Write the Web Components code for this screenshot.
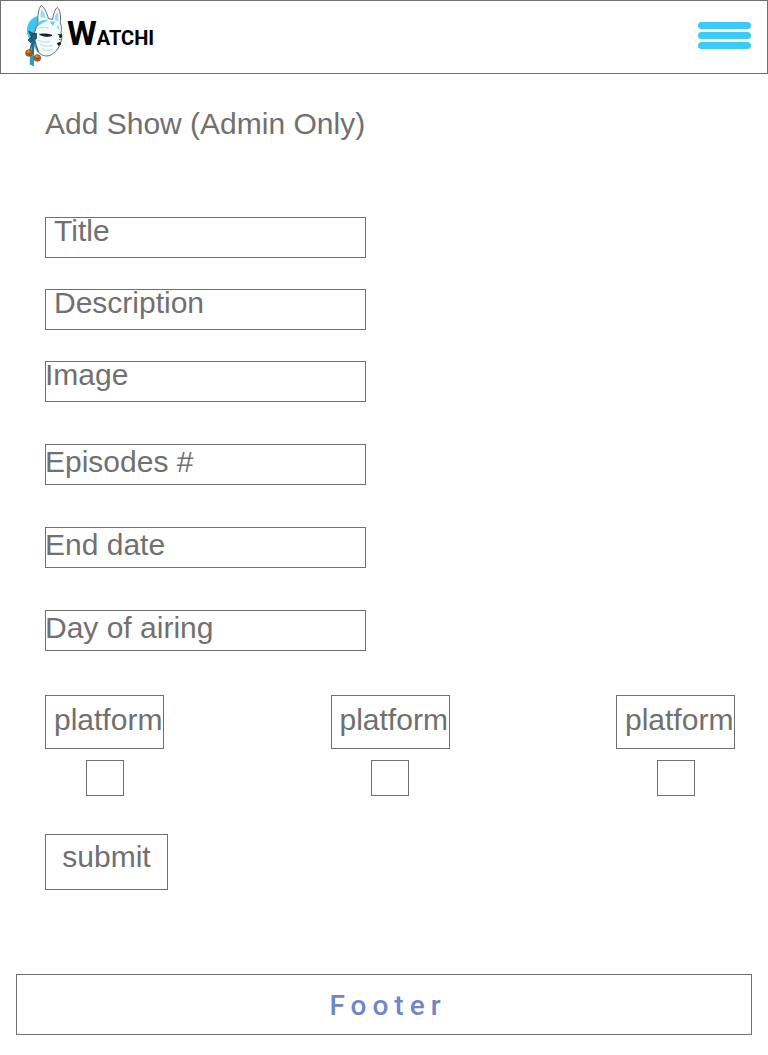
<!DOCTYPE html>
<html lang="en">
<head>
<meta charset="utf-8">
<meta name="viewport" content="width=device-width, initial-scale=1">
<title>Watchi – Add Show</title>
<style>
  :root { --line: #707070; --accent: #3ccaf8; --footer: #6f87c7; }
  body { margin: 0; background: #fff; color: #707070; font: 30px/34px "Liberation Sans", Arial, sans-serif; }
</style>
</head>
<body>
<watchi-page></watchi-page>
<script>
const define = (name, html, Base = HTMLElement) => {
  const template = document.createElement('template');
  template.innerHTML = '<style>*{box-sizing:border-box}</style>' + html;
  customElements.define(name, class extends Base {
    constructor() {
      super();
      this.attachShadow({ mode: 'open' }).append(template.content.cloneNode(true));
    }
  });
};

/* Passes the value of the inner input on to the surrounding form. */
class FormField extends HTMLElement {
  static formAssociated = true;
  connectedCallback() {
    const internals = this.internals ??= this.attachInternals();
    const input = this.shadowRoot.querySelector('input');
    input.addEventListener('input', () => {
      const empty = input.type === 'checkbox' && !input.checked;
      internals.setFormValue(empty ? null : input.value);
    });
  }
}

define('watchi-logo', `
<style>
  :host { display: block; }
  a { display: flex; align-items: center; color: #000; text-decoration: none; }
  svg { display: block; width: 45px; height: 68px; }
  .word { font: bold 34px/40px "Liberation Sans Narrow", Roboto, sans-serif; }
  .word span { font-size: 20px; }
</style>
<a href="#home" aria-label="Watchi">
  <svg viewBox="0 0 135 204" aria-hidden="true">
    <path d="M50 42C28 44 14 66 15 86c0 18 9 28 20 38l18-14z" fill="#43c3ef"/>
    <path d="M49 66C45 44 49 20 58 10c9 6 17 22 21 40l13 2c2-16 8-32 14-36 9 8 11 28 9 46 4 12 4 22 2 30 4 10 4 22-2 32-6 20-22 36-40 38-15 0-29-10-35-26-6-24-5-52 9-70z" fill="#f8fcfe" stroke="#5d6c75" stroke-width="3" stroke-linejoin="round"/>
    <path d="M55 46c0-12 2-20 5-24 5 6 8 14 11 25zM98 54c0-11 4-20 8-25 4 8 4 18 3 30z" fill="#9bdcf5"/>
    <path d="M49 62c8-8 20-10 30-8-8 5-18 8-32 20zM84 58l7 14 9-12M108 68l5 18-8-10z" fill="#63cdf2"/>
    <path d="M46 80c10-4 22-5 34-2M46 114c12 6 26 8 38 4M54 126c14 8 26 8 38 4M60 140c12 8 24 6 32 2" fill="none" stroke="#b9e6f8" stroke-width="4"/>
    <path d="M53 97c8 5 24 9 37 3-9-4-23-5-37-3zM107 96c3 3 6 3 9 1" fill="#15232c" stroke="#15232c" stroke-width="3"/>
    <path d="M112 101l6-4 1 8-5 3zM106 124l8-3 3 5-8 4zM111 112l6 2" fill="#111" stroke="#111" stroke-width="2"/>
    <path d="M20 88l20 8 4 12-18 14-8-8 10-10zM30 96l14-2-2 18-12-2z" fill="#176b88" stroke="#123f51" stroke-width="2"/>
    <path d="M34 106c-2 14-8 26-10 38M37 108c2 14 8 30 12 42M34 112c-6 24-3 50-8 76M38 112c-6 30-4 48-5 80" fill="none" stroke="#176b88" stroke-width="4"/>
    <path d="M24 158l10-4-1 38-10-6z" fill="#2e9cc2"/>
    <g fill="#cf701f" stroke="#6d3610" stroke-width="2">
      <circle cx="21" cy="153" r="10"/><circle cx="46" cy="168" r="10"/>
    </g>
    <path d="M13 154q8 4 16 0M38 168q8 4 16 0M22 156v5M47 171v4" fill="none" stroke="#542708" stroke-width="2"/>
    <path d="M17 148l4-1M42 163l4-1" stroke="#f3a546" stroke-width="3"/>
  </svg>
  <span class="word">W<span>ATCHI</span></span>
</a>`);

define('menu-button', `
<style>
  :host { display: block; }
  button { display: flex; flex-direction: column; gap: 3px; width: 53px; padding: 0; border: 0; background: none; cursor: pointer; }
  i { width: 100%; height: 7px; border-radius: 4px; background: var(--accent); }
</style>
<button type="button" aria-label="Menu"><i></i><i></i><i></i></button>`);

define('site-header', `
<style>
  :host { display: block; }
  header { display: flex; align-items: center; justify-content: space-between; min-height: 74px; padding: 0 16px 3px 21px; border: 1px solid var(--line); }
</style>
<header><watchi-logo></watchi-logo><menu-button></menu-button></header>`);

define('text-field', `
<style>
  :host { display: block; max-width: 321px; }
  label { display: grid; }
  input, span { grid-area: 1 / 1; }
  input { width: 100%; height: 41px; margin: 0; padding: 0 8px; border: 1px solid var(--line); border-radius: 0; background: #fff; color: inherit; font: inherit; }
  span { z-index: 1; line-height: 28px; pointer-events: none; }
  :host([inset]) span { padding-left: 9px; }
  :host([low]) span { padding-top: 4px; }
  input:focus + span { opacity: .3; }
</style>
<label><input type="text"><span><slot></slot></span></label>`, FormField);

define('platform-option', `
<style>
  :host { display: block; }
  label { display: grid; justify-items: center; gap: 11px; }
  span { width: 119px; height: 54px; padding: 7px 0 0 8px; border: 1px solid var(--line); white-space: nowrap; }
  input { appearance: none; width: 38px; height: 36px; margin: 0; border: 1px solid var(--line); background: #fff; }
  input:checked { background: var(--accent); }
</style>
<label><span><slot></slot></span><input type="checkbox"></label>`, FormField);

define('show-form', `
<style>
  :host { display: block; }
  h1 { margin: 0 0 76px; font: inherit; }
  .group { display: grid; gap: 42px; margin-bottom: 42px; }
  .group.tight { gap: 31px; }
  fieldset { display: flex; justify-content: space-between; min-width: 0; margin: 0 0 38px; padding: 2px 0 0; border: 0; }
  button { display: block; width: 123px; height: 56px; padding: 0 0 10px; border: 1px solid var(--line); border-radius: 0; background: #fff; color: inherit; font: inherit; cursor: pointer; }
</style>
<h1>Add Show (Admin Only)</h1>
<form>
  <div class="group tight">
    <text-field name="title" inset>Title</text-field>
    <text-field name="description" inset>Description</text-field>
    <text-field name="image">Image</text-field>
  </div>
  <div class="group">
    <text-field name="episodes" low>Episodes #</text-field>
    <text-field name="end-date" low>End date</text-field>
    <text-field name="airing-day" low>Day of airing</text-field>
  </div>
  <fieldset aria-label="Platforms">
    <platform-option name="platform-1">platform</platform-option>
    <platform-option name="platform-2">platform</platform-option>
    <platform-option name="platform-3">platform</platform-option>
  </fieldset>
  <button type="submit">submit</button>
</form>`);

define('site-footer', `
<style>
  :host { display: block; }
  footer { padding: 14px 0 12px 8px; border: 1px solid var(--line); color: var(--footer); font: 500 28px/33px Roboto, sans-serif; letter-spacing: 6px; text-align: center; }
</style>
<footer><slot></slot></footer>`);

define('watchi-page', `
<style>
  :host { display: block; }
  main { padding: 33px 33px 84px 45px; }
  site-footer { margin: 0 16px 20px; }
</style>
<site-header></site-header>
<main><show-form></show-form></main>
<site-footer>Footer</site-footer>`);
</script>
</body>
</html>
